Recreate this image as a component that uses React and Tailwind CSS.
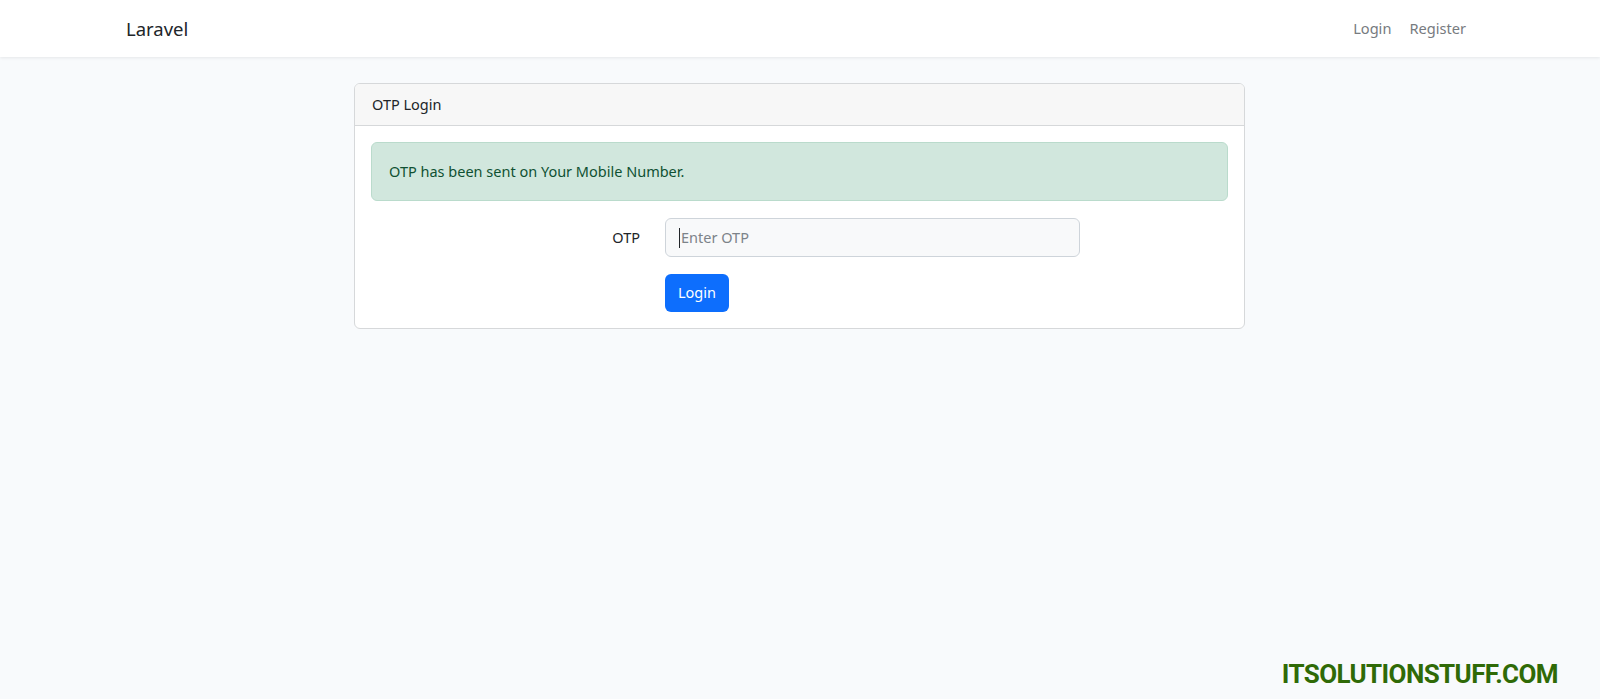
import React from "react";

export default function App() {
  return (
    <div className="min-h-screen h-[699px] bg-[#f8fafc] relative overflow-hidden" style={{ fontFamily: '"Noto Sans", "Open Sans", sans-serif' }}>
      <nav className="h-[57px] bg-white shadow-[0_1px_3px_rgba(0,0,0,0.08)] flex items-center justify-between pl-[126px] pr-[134px]">
        <span className="text-[18.5px] text-[#212529]">Laravel</span>
        <div className="flex items-center gap-[18px] text-[14.6px] text-[#777b80]">
          <span>Login</span>
          <span>Register</span>
        </div>
      </nav>

      <main className="pt-[26px]">
        <div className="ml-[354px] w-[891px] bg-white border border-[#d6d8da] rounded-[6px] overflow-hidden">
          <div className="h-[42px] bg-[#f7f7f7] border-b border-[#d6d8da] flex items-center px-[17px] text-[14.5px] text-[#212529]">
            OTP Login
          </div>
          <div className="p-[16px]">
            <div className="h-[59px] bg-[#d1e7dd] border border-[#badbcc] rounded-[6px] flex items-center px-[17px] text-[14.5px] text-[#0f5132]">
              OTP has been sent on Your Mobile Number.
            </div>
            <div className="mt-[17px] flex items-center">
              <label className="w-[269px] text-right text-[14.5px] text-[#212529]">OTP</label>
              <div className="ml-[25px] w-[415px] h-[39px] bg-[#f8f9fa] border border-[#ced4da] rounded-[6px] flex items-center px-[13px] text-[14.5px] text-[#7d8389]">
                <span className="w-px h-[20px] bg-[#212529] mr-[1px]" />
                Enter OTP
              </div>
            </div>
            <div className="mt-[17px] pl-[294px]">
              <button className="h-[38px] w-[64px] bg-[#0d6efd] text-white text-[14.5px] rounded-[6px]">
                Login
              </button>
            </div>
          </div>
        </div>
      </main>

      <div className="absolute right-[42px] top-[661px] text-[26px] leading-[26px] font-bold text-[#2f6a07] tracking-[-0.6px]" style={{ fontFamily: "Roboto, sans-serif" }}>
        ITSOLUTIONSTUFF.COM
      </div>
    </div>
  );
}
